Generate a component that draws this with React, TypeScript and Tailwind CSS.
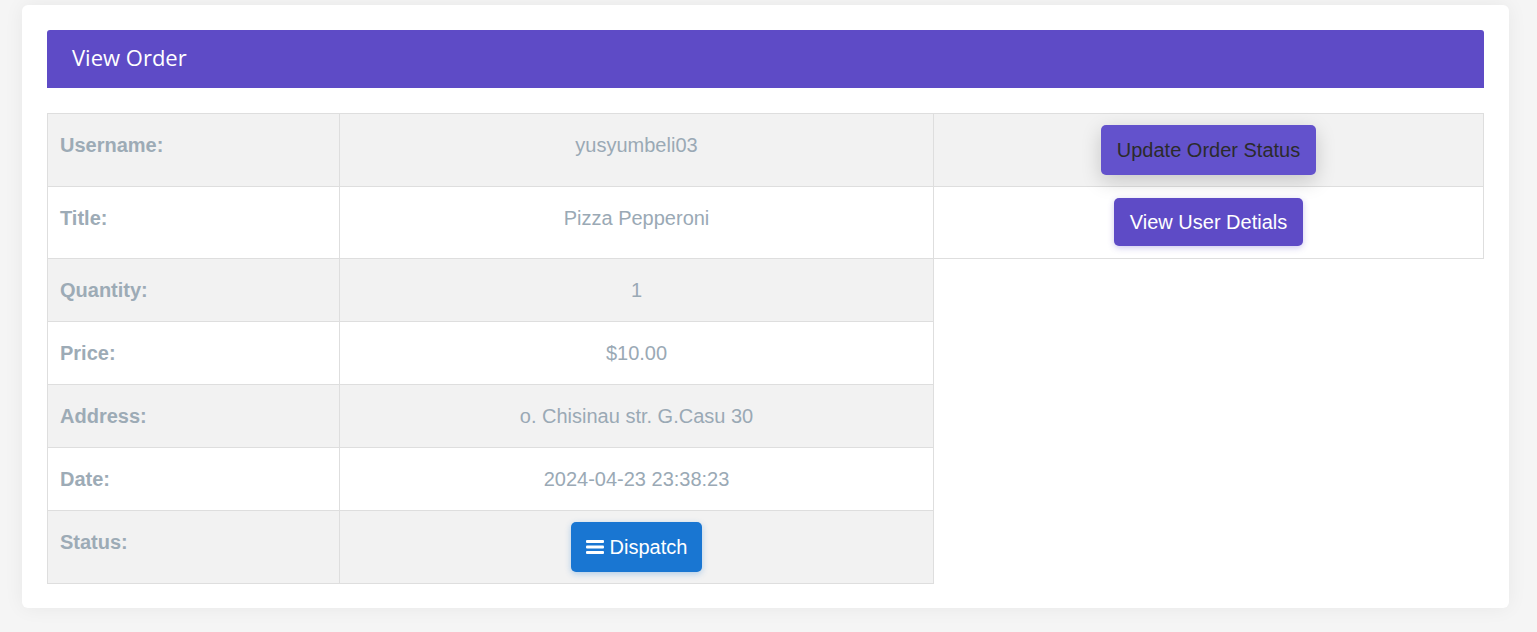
import React from "react";

function Bars() {
  return (
    <svg width="18" height="16" viewBox="0 0 18 16" className="shrink-0">
      <rect x="0" y="1" width="18" height="3" rx="1" fill="white" />
      <rect x="0" y="6.5" width="18" height="3" rx="1" fill="white" />
      <rect x="0" y="12" width="18" height="3" rx="1" fill="white" />
    </svg>
  );
}

export default function App() {
  const td =
    "border border-[#dedede] align-top pt-[16px] px-[12px] text-[20px] leading-[30px]";
  const lab = `${td} font-bold text-[#9dabb6] text-left`;
  const val = `${td} text-[#9aa9b5] text-center`;
  const btnCell = "border border-[#dedede] align-top pt-[11px] text-center";
  return (
    <div
      className="w-[1537px] h-[632px] bg-[#f5f5f5] pt-[5px] pl-[22px]"
      style={{ fontFamily: '"Liberation Sans", Arial, sans-serif' }}
    >
      <div className="w-[1487px] h-[603px] bg-white rounded-[6px] shadow-[0_0_20px_rgba(0,0,0,0.06)] px-[25px] pt-[25px]">
        <div
          className="h-[58px] bg-[#5e4bc6] rounded-t-[3px] flex items-center pl-[25px] pb-[3px] text-white text-[22px]"
          style={{ fontFamily: '"Open Sans", sans-serif' }}
        >
          View Order
        </div>
        <table className="mt-[25px] border-collapse w-[1436px] table-fixed">
          <colgroup>
            <col className="w-[292px]" />
            <col className="w-[594px]" />
            <col className="w-[550px]" />
          </colgroup>
          <tbody>
            <tr className="bg-[#f2f2f2] h-[73px]">
              <td className={lab}>Username:</td>
              <td className={val}>yusyumbeli03</td>
              <td className={btnCell}>
                <button className="h-[50px] px-[16px] rounded-[5px] bg-[#6352cc] text-[#2b2b2b] text-[20px] leading-[30px] shadow-[0_6px_20px_rgba(0,0,0,0.18)]">
                  Update Order Status
                </button>
              </td>
            </tr>
            <tr className="bg-white h-[72px]">
              <td className={lab}>Title:</td>
              <td className={val}>Pizza Pepperoni</td>
              <td className={btnCell}>
                <button className="h-[48px] px-[16px] rounded-[5px] bg-[#5e4bc6] text-white text-[20px] leading-[30px] shadow-[0_2px_6px_rgba(94,75,198,0.3)]">
                  View User Detials
                </button>
              </td>
            </tr>
            <tr className="bg-[#f2f2f2] h-[63px]">
              <td className={lab}>Quantity:</td>
              <td className={val}>1</td>
            </tr>
            <tr className="bg-white h-[63px]">
              <td className={lab}>Price:</td>
              <td className={val}>$10.00</td>
            </tr>
            <tr className="bg-[#f2f2f2] h-[63px]">
              <td className={lab}>Address:</td>
              <td className={val}>o. Chisinau str. G.Casu 30</td>
            </tr>
            <tr className="bg-white h-[63px]">
              <td className={lab}>Date:</td>
              <td className={val}>2024-04-23 23:38:23</td>
            </tr>
            <tr className="bg-[#f2f2f2] h-[73px]">
              <td className={lab}>Status:</td>
              <td className={btnCell}>
                <button className="inline-flex items-center gap-[6px] h-[50px] px-[15px] rounded-[5px] bg-[#1976d2] text-white text-[20px] leading-[30px] shadow-[0_2px_6px_rgba(25,118,210,0.3)]">
                  <Bars />
                  Dispatch
                </button>
              </td>
              <td className="bg-white"></td>
            </tr>
          </tbody>
        </table>
      </div>
    </div>
  );
}
